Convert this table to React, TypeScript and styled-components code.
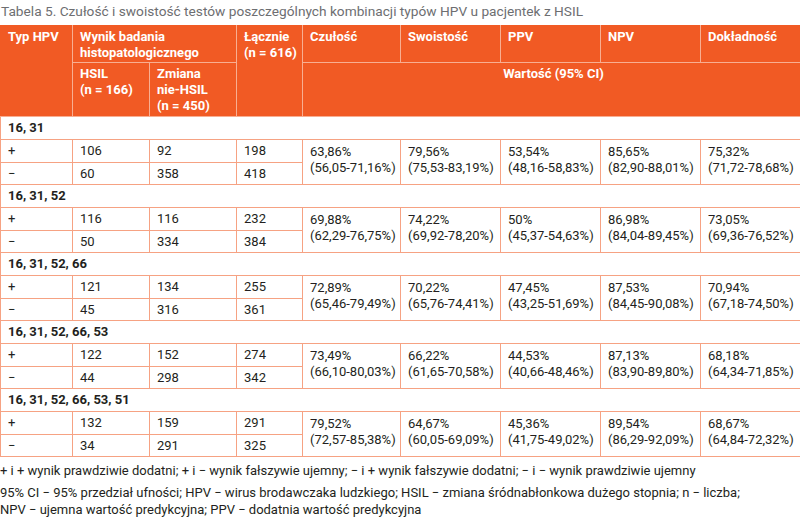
import React from "react";
import styled, { createGlobalStyle } from "styled-components";

const ORANGE = "#F15A24";
const LINE = "#F6A283";
const HEAD_LINE = "#F8AE92";
const TEXT = "#231F20";

const Global = createGlobalStyle`
  html, body { margin: 0; padding: 0; background: #ffffff; }
  body { font-family: Roboto, "Liberation Sans", Arial, sans-serif; color: ${TEXT}; }
`;

const Page = styled.div`
  width: 800px;
`;

const Title = styled.div`
  height: 25px;
  font-size: 13.7px;
  line-height: 23px;
  color: #6d6e71;
  padding-left: 1px;
  white-space: nowrap;
`;

const Table = styled.table`
  width: 800px;
  border-collapse: collapse;
  table-layout: fixed;
  font-size: 13px;
  line-height: 16px;
`;

const HeadRow = styled.tr<{ $h: number }>`
  height: ${(p) => p.$h}px;
`;

const HeadCell = styled.th<{ $center?: boolean; $first?: boolean }>`
  background: ${ORANGE};
  color: #ffffff;
  font-weight: 700;
  text-align: ${(p) => (p.$center ? "center" : "left")};
  vertical-align: top;
  padding: 3px 3px 0 7px;
  border: 1px solid ${HEAD_LINE};
  border-top-color: ${ORANGE};
  white-space: nowrap;
  ${(p) => (p.$first ? `border-left-color: ${ORANGE};` : "")}
`;

const BodyRow = styled.tr<{ $h: number }>`
  height: ${(p) => p.$h}px;
`;

const LabelCell = styled.td`
  font-weight: 700;
  padding: 0 7px;
  vertical-align: middle;
  border: 1px solid ${LINE};
  color: ${TEXT};
`;

const Cell = styled.td`
  padding: 0 7px;
  vertical-align: middle;
  border: 1px solid ${LINE};
  color: ${TEXT};
`;

const ValueCell = styled.td`
  padding: 4px 3px 0 7px;
  vertical-align: top;
  border: 1px solid ${LINE};
  color: ${TEXT};
  white-space: nowrap;
`;

const Notes = styled.div`
  font-size: 13px;
  line-height: 17px;
  color: ${TEXT};
  padding-top: 5px;
`;

const Note = styled.p<{ $gap: number }>`
  margin: ${(p) => p.$gap}px 0 0 0;
`;

type Group = {
  label: string;
  plus: [string, string, string];
  minus: [string, string, string];
  values: [string, string][];
};

const groups: Group[] = [
  {
    label: "16, 31",
    plus: ["106", "92", "198"],
    minus: ["60", "358", "418"],
    values: [
      ["63,86%", "(56,05-71,16%)"],
      ["79,56%", "(75,53-83,19%)"],
      ["53,54%", "(48,16-58,83%)"],
      ["85,65%", "(82,90-88,01%)"],
      ["75,32%", "(71,72-78,68%)"],
    ],
  },
  {
    label: "16, 31, 52",
    plus: ["116", "116", "232"],
    minus: ["50", "334", "384"],
    values: [
      ["69,88%", "(62,29-76,75%)"],
      ["74,22%", "(69,92-78,20%)"],
      ["50%", "(45,37-54,63%)"],
      ["86,98%", "(84,04-89,45%)"],
      ["73,05%", "(69,36-76,52%)"],
    ],
  },
  {
    label: "16, 31, 52, 66",
    plus: ["121", "134", "255"],
    minus: ["45", "316", "361"],
    values: [
      ["72,89%", "(65,46-79,49%)"],
      ["70,22%", "(65,76-74,41%)"],
      ["47,45%", "(43,25-51,69%)"],
      ["87,53%", "(84,45-90,08%)"],
      ["70,94%", "(67,18-74,50%)"],
    ],
  },
  {
    label: "16, 31, 52, 66, 53",
    plus: ["122", "152", "274"],
    minus: ["44", "298", "342"],
    values: [
      ["73,49%", "(66,10-80,03%)"],
      ["66,22%", "(61,65-70,58%)"],
      ["44,53%", "(40,66-48,46%)"],
      ["87,13%", "(83,90-89,80%)"],
      ["68,18%", "(64,34-71,85%)"],
    ],
  },
  {
    label: "16, 31, 52, 66, 53, 51",
    plus: ["132", "159", "291"],
    minus: ["34", "291", "325"],
    values: [
      ["79,52%", "(72,57-85,38%)"],
      ["64,67%", "(60,05-69,09%)"],
      ["45,36%", "(41,75-49,02%)"],
      ["89,54%", "(86,29-92,09%)"],
      ["68,67%", "(64,84-72,32%)"],
    ],
  },
];

const widths = [72, 77, 87, 66, 98, 100, 100, 100, 100];

export default function App() {
  return (
    <Page>
      <Global />
      <Title>
        Tabela 5. Czułość i swoistość testów poszczególnych kombinacji typów HPV u pacjentek z HSIL
      </Title>
      <Table>
        <colgroup>
          {widths.map((w, i) => (
            <col key={i} style={{ width: w }} />
          ))}
        </colgroup>
        <thead>
          <HeadRow $h={37}>
            <HeadCell rowSpan={2} $first>
              Typ HPV
            </HeadCell>
            <HeadCell colSpan={2}>
              Wynik badania
              <br />
              histopatologicznego
            </HeadCell>
            <HeadCell rowSpan={2}>
              Łącznie
              <br />
              (n = 616)
            </HeadCell>
            <HeadCell>Czułość</HeadCell>
            <HeadCell>Swoistość</HeadCell>
            <HeadCell>PPV</HeadCell>
            <HeadCell>NPV</HeadCell>
            <HeadCell>Dokładność</HeadCell>
          </HeadRow>
          <HeadRow $h={54}>
            <HeadCell>
              HSIL
              <br />
              (n = 166)
            </HeadCell>
            <HeadCell>
              Zmiana
              <br />
              nie-HSIL
              <br />
              (n = 450)
            </HeadCell>
            <HeadCell colSpan={5} $center>
              Wartość (95% CI)
            </HeadCell>
          </HeadRow>
        </thead>
        <tbody>
          {groups.map((g) => (
            <React.Fragment key={g.label}>
              <BodyRow $h={23}>
                <LabelCell colSpan={9}>{g.label}</LabelCell>
              </BodyRow>
              <BodyRow $h={23}>
                <Cell>+</Cell>
                {g.plus.map((v, i) => (
                  <Cell key={i}>{v}</Cell>
                ))}
                {g.values.map(([a, b], i) => (
                  <ValueCell key={i} rowSpan={2}>
                    {a}
                    <br />
                    {b}
                  </ValueCell>
                ))}
              </BodyRow>
              <BodyRow $h={22}>
                <Cell>−</Cell>
                {g.minus.map((v, i) => (
                  <Cell key={i}>{v}</Cell>
                ))}
              </BodyRow>
            </React.Fragment>
          ))}
        </tbody>
      </Table>
      <Notes>
        <Note $gap={0}>
          + i + wynik prawdziwie dodatni; + i − wynik fałszywie ujemny; − i + wynik fałszywie dodatni; − i − wynik prawdziwie ujemny
        </Note>
        <Note $gap={5}>
          95% CI − 95% przedział ufności; HPV − wirus brodawczaka ludzkiego; HSIL − zmiana śródnabłonkowa dużego stopnia; n − liczba;
          <br />
          NPV − ujemna wartość predykcyjna; PPV − dodatnia wartość predykcyjna
        </Note>
      </Notes>
    </Page>
  );
}
